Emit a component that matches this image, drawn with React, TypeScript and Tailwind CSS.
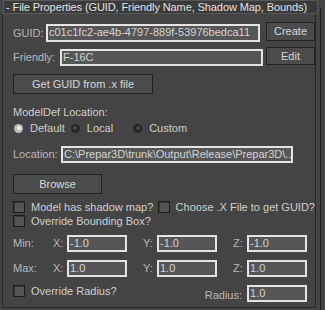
import React from 'react';

const font = { fontFamily: '"Liberation Sans", Arial, sans-serif' };

const Field = ({ value, className = '' }: { value: string; className?: string }) => (
  <div
    className={`h-[17px] border-2 border-[#e4e4e4] bg-[#565656] text-[#d4d4d4] text-[11px] leading-[13px] pl-[1px] whitespace-nowrap overflow-hidden ${className}`}
  >
    {value}
  </div>
);

const Button = ({ label, className = '' }: { label: string; className?: string }) => (
  <div
    className={`flex items-center justify-center border border-[#232323] bg-[#4b4b4b] text-[#d8d8d8] text-[11px] ${className}`}
  >
    {label}
  </div>
);

const Check = ({ label }: { label: string }) => (
  <div className="flex items-center h-[12px] whitespace-nowrap">
    <div className="shrink-0 w-[12px] h-[12px] border border-[#1c1c1c] bg-[#555555] shadow-[inset_1px_1px_0_#3a3a3a]" />
    <span className="ml-[6px] text-[11px] text-[#cfcfcf]">{label}</span>
  </div>
);

const Radio = ({ label, checked }: { label: string; checked?: boolean }) => (
  <div className="flex items-center">
    <div
      className={`w-[9px] h-[9px] rounded-full flex items-center justify-center ${
        checked ? 'bg-[#bdbdbd]' : 'bg-[#262626]'
      }`}
    >
      <div className={`w-[4px] h-[4px] rounded-full ${checked ? 'bg-[#f2f2f2]' : 'bg-[#4a4a4a]'}`} />
    </div>
    <span className="ml-[7px] text-[11px] text-[#cfcfcf]">{label}</span>
  </div>
);

export default function App() {
  return (
    <div className="w-[325px] h-[310px] bg-[#444444] overflow-hidden flex" style={font}>
      <div className="w-[320px] h-[310px] flex flex-col">
        {/* TITLE */}
        <div className="ml-[3px] w-[315px] h-[14px] bg-[#3a3a3a] border border-[#585858] text-[#e2e2e2] text-[11px] tracking-[-0.1px] leading-[12px] pl-[2px] whitespace-nowrap">
          - File Properties (GUID, Friendly Name, Shadow Map, Bounds)
        </div>

        {/* GROUP */}
        <div className="ml-[2px] w-[314px] border-l border-r border-b border-[#262626] pl-[10px] pb-[5px] text-[#b8b8b8] text-[11px]">
          {/* GUID */}
          <div className="mt-[8px] h-[20px] flex items-start">
            <span className="w-[33px] mt-[5px] leading-[12px]">GUID:</span>
            <Field value="c01c1fc2-ae4b-4797-889f-53976bedca11" className="w-[214px] mt-[2px] h-[18px]" />
            <Button label="Create" className="ml-[6px] w-[49px] h-[19px]" />
          </div>

          {/* FRIENDLY */}
          <div className="mt-[5px] h-[19px] flex items-start">
            <span className="w-[47px] mt-[4px] leading-[12px]">Friendly:</span>
            <Field value="F-16C" className="w-[203px] mt-[2px]" />
            <Button label="Edit" className="ml-[3px] w-[49px] h-[18px]" />
          </div>

          <Button label="Get GUID from .x file" className="mt-[8px] w-[140px] h-[20px]" />

          <div className="mt-[12px] h-[13px] leading-[13px] text-[#cfcfcf]">ModelDef Location:</div>

          {/* RADIOS */}
          <div className="mt-[3px] h-[12px] flex items-center pl-[1px]">
            <Radio label="Default" checked />
            <div className="ml-[6px]">
              <Radio label="Local" />
            </div>
            <div className="ml-[20px]">
              <Radio label="Custom" />
            </div>
          </div>

          {/* LOCATION */}
          <div className="mt-[12px] h-[17px] flex items-center">
            <span className="w-[48px]">Location:</span>
            <Field value="C:\Prepar3D\trunk\Output\Release\Prepar3D\.." className="w-[232px]" />
          </div>

          <Button label="Browse" className="mt-[11px] w-[89px] h-[20px] text-[#bdbdbd]" />

          {/* CHECKS */}
          <div className="mt-[7px] flex">
            <div className="w-[150px]">
              <Check label="Model has shadow map?" />
            </div>
            <Check label="Choose .X File to get GUID?" />
          </div>
          <div className="mt-[2px]">
            <Check label="Override Bounding Box?" />
          </div>

          {/* MIN / MAX */}
          {[
            { label: 'Min:', v: '-1.0' },
            { label: 'Max:', v: '1.0' },
          ].map(r => (
            <div key={r.label} className="mt-[8px] h-[17px] flex items-center">
              <span className="w-[40px]">{r.label}</span>
              <span className="w-[14px]">X:</span>
              <Field value={r.v} className="w-[60px]" />
              <span className="w-[16px]" />
              <span className="w-[14px]">Y:</span>
              <Field value={r.v} className="w-[60px]" />
              <span className="w-[16px]" />
              <span className="w-[14px]">Z:</span>
              <Field value={r.v} className="w-[60px]" />
            </div>
          ))}

          {/* RADIUS */}
          <div className="mt-[8px] h-[17px] w-[294px] flex items-start">
            <div className="flex-1">
              <Check label="Override Radius?" />
            </div>
            <span className="mr-[5px] mt-[2px]">Radius:</span>
            <Field value="1.0" className="w-[60px]" />
          </div>
        </div>
      </div>
      <div className="mt-[8px] w-[1px] h-[302px] bg-[#1e1e1e]" />
    </div>
  );
}
